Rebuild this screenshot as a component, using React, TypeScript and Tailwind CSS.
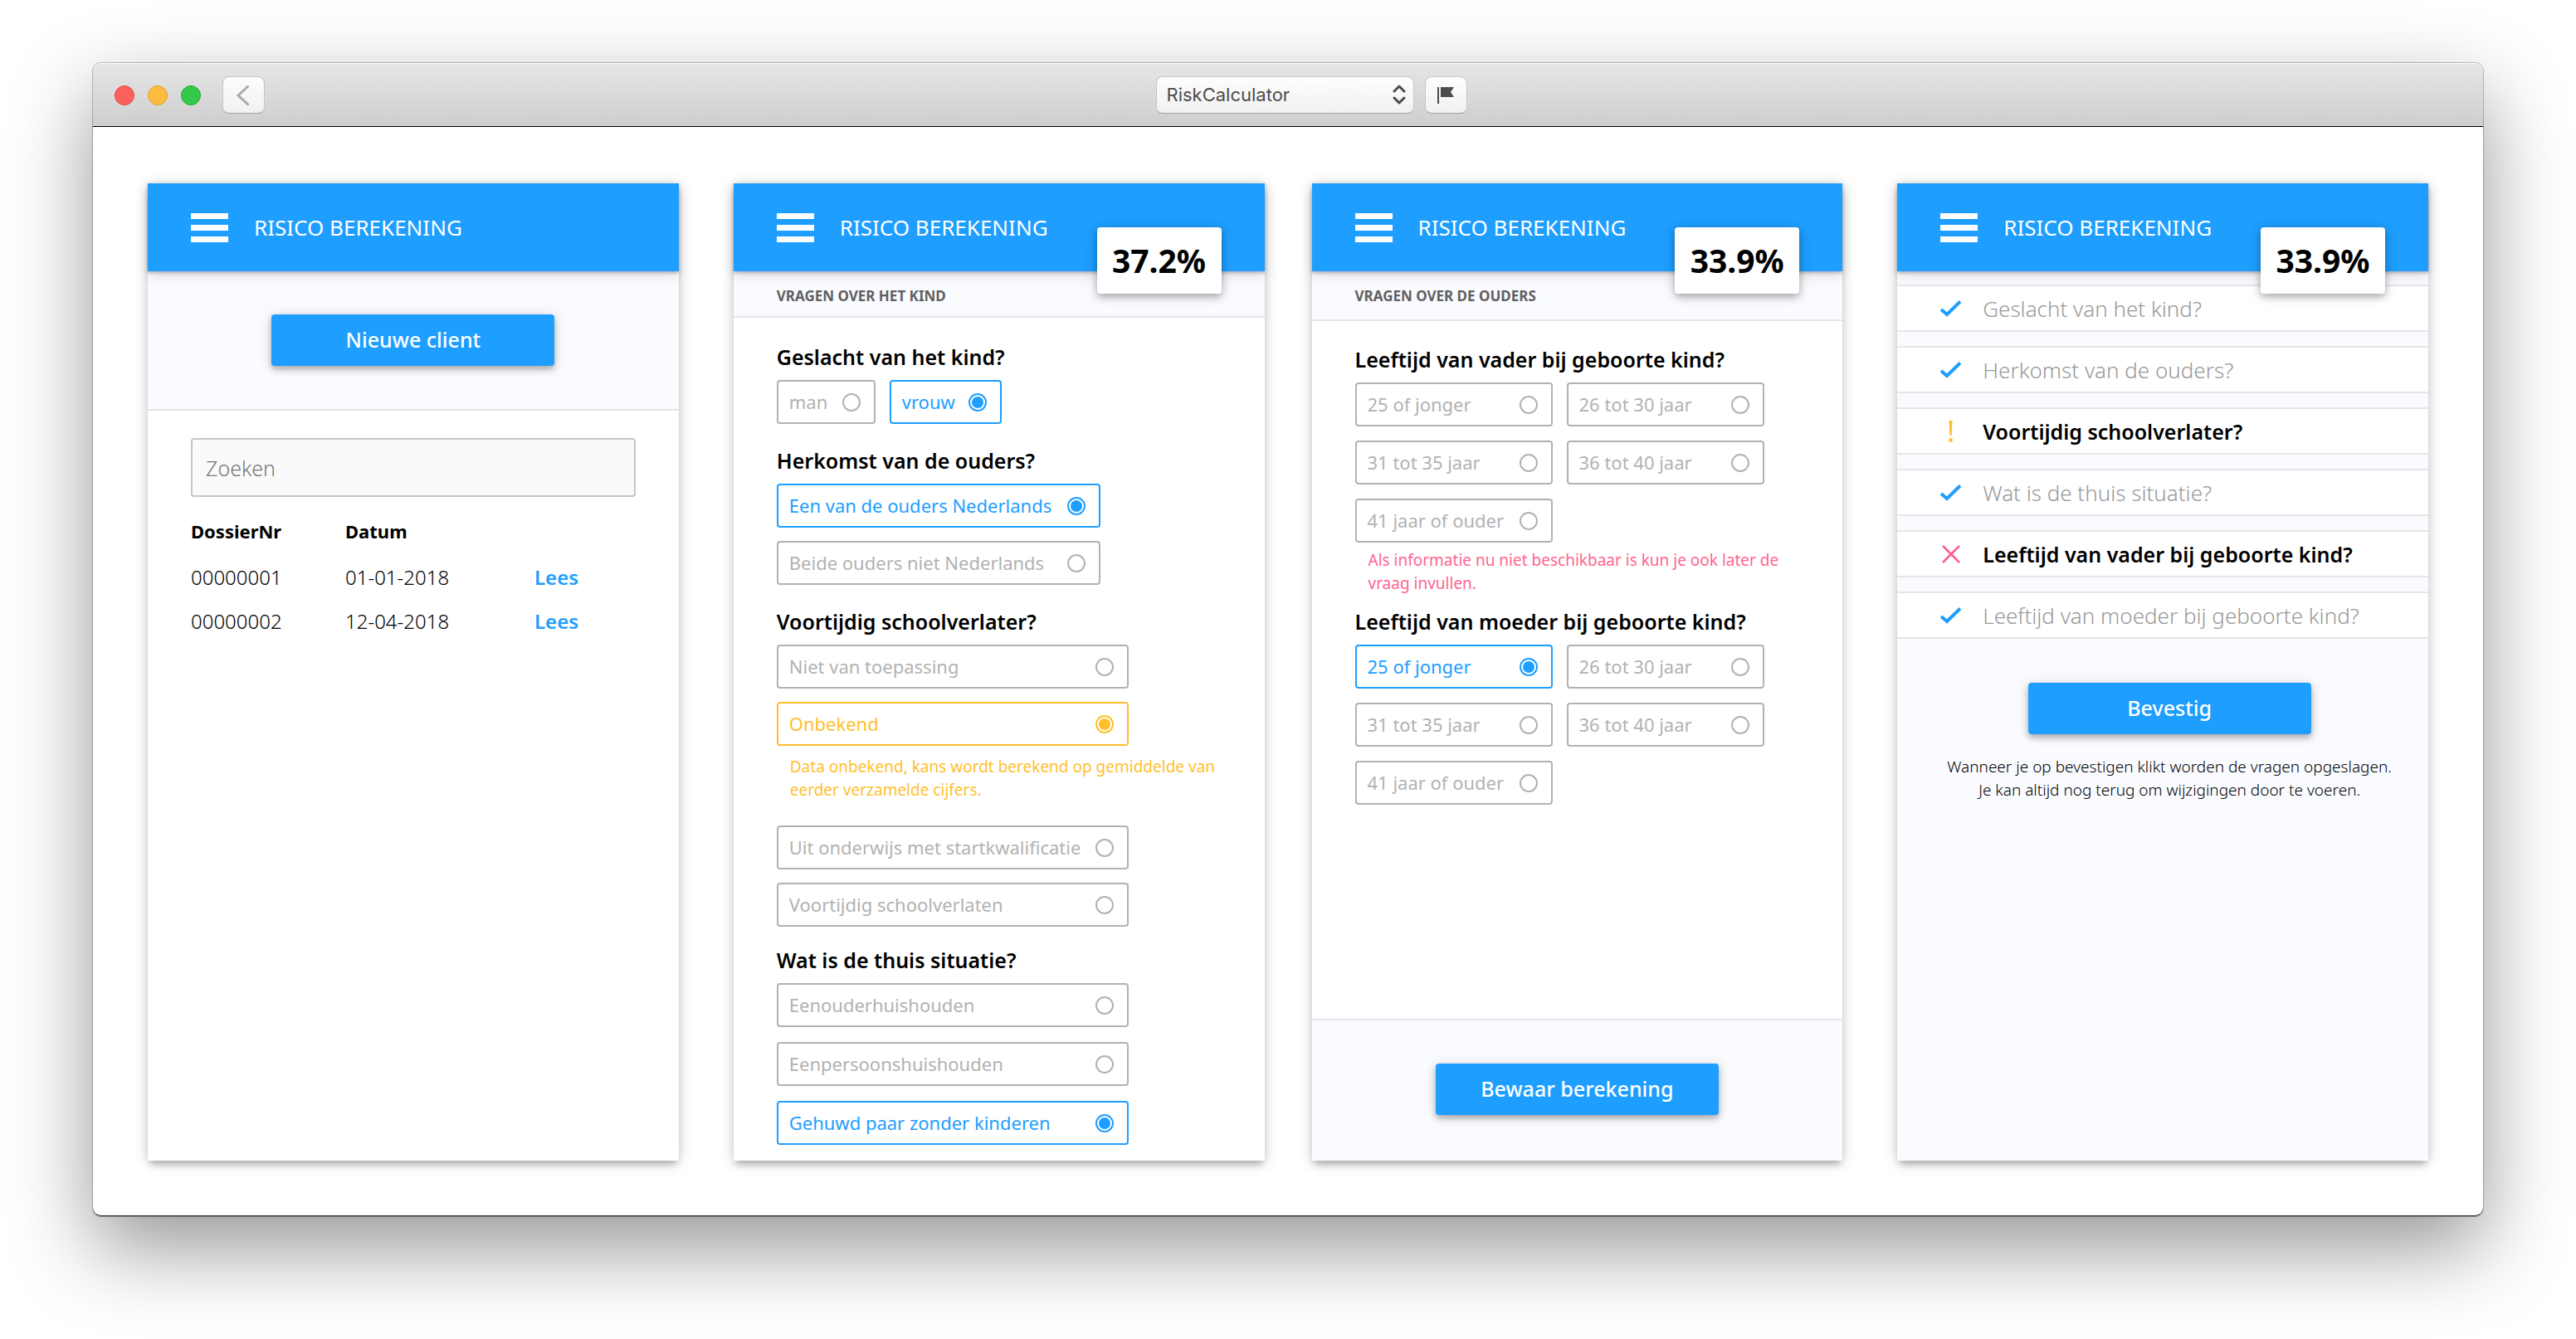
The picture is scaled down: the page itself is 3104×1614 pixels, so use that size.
import { useId, type ReactNode } from 'react';

type Option = { label: string; checked?: boolean; unknown?: boolean; width?: string; hint?: string };

const AGES = ['25 of jonger', '26 tot 30 jaar', '31 tot 35 jaar', '36 tot 40 jaar', '41 jaar of ouder'];

function TitleBar() {
  return (
    <header className="grid h-[77px] grid-cols-[1fr_311px_1fr] items-center rounded-t-[10px] border-t border-b border-t-white border-b-black bg-linear-to-b from-[#e6e6e6] to-[#cecece] pl-[26px] pr-[34px]">
      <div className="flex items-center gap-[26px]">
        <div className="flex gap-4">
          <span className="size-6 rounded-full border border-[#e2463f] bg-[#fc605c]" />
          <span className="size-6 rounded-full border border-[#dfa023] bg-[#fdbc40]" />
          <span className="size-6 rounded-full border border-[#1dad2b] bg-[#34c84a]" />
        </div>
        <button
          type="button"
          aria-label="Terug"
          className="flex h-[45px] w-[51px] items-center justify-center rounded-lg border border-[#c6c6c6] border-b-[#a3a3a3] bg-linear-to-b from-[#fdfdfd] to-[#f1f1f1]"
        >
          <svg className="mr-1 h-6 w-4" viewBox="0 0 16 24" fill="none" stroke="#a9a9a9" strokeWidth="3">
            <path d="M15 1 3 12l12 11" strokeLinecap="round" />
          </svg>
        </button>
      </div>
      <div className="relative">
        <select
          aria-label="Project"
          className="h-[45px] w-full appearance-none rounded-lg border border-[#c6c6c6] border-b-[#a3a3a3] bg-linear-to-b from-[#fdfdfd] to-[#f1f1f1] pl-3 font-[Inter,sans-serif] text-[22px] text-[#4c4c4c]"
        >
          <option>RiskCalculator</option>
        </select>
        <svg
          className="pointer-events-none absolute top-[10px] right-[10px] h-6 w-4"
          viewBox="0 0 16 24"
          fill="none"
          stroke="#4c4c4c"
          strokeWidth="3"
          strokeLinecap="round"
          strokeLinejoin="round"
        >
          <path d="m2 8 6-6 6 6M2 16l6 6 6-6" />
        </svg>
      </div>
      <button
        type="button"
        aria-label="Markeren"
        className="ml-[13px] flex h-[45px] w-[51px] items-center justify-center rounded-lg border border-[#c6c6c6] border-b-[#a3a3a3] bg-linear-to-b from-[#fdfdfd] to-[#f1f1f1]"
      >
        <svg className="h-5 w-5" viewBox="0 0 20 20" fill="#4c4c4c">
          <path d="M0 0h2v20H0zM4 0h16l-4 6 4 6H4z" />
        </svg>
      </button>
    </header>
  );
}

function Panel({ score, className, children }: { score?: string; className: string; children: ReactNode }) {
  return (
    <section
      className={`flex min-w-0 flex-1 flex-col shadow-[0_7px_8px_-3px_rgba(0,0,0,0.24),0_2px_16px_rgba(0,0,0,0.2)] ${className}`}
    >
      <header className="relative flex h-[106px] shrink-0 items-center gap-[31px] bg-[#1e9eff] px-[52px] shadow-[0_2px_4px_rgba(0,0,0,0.25),0_6px_14px_rgba(0,0,0,0.1)]">
        <button type="button" aria-label="Menu" className="flex flex-col gap-[7px]">
          <span className="h-[7px] w-[45px] bg-white" />
          <span className="h-[7px] w-[45px] bg-white" />
          <span className="h-[7px] w-[45px] bg-white" />
        </button>
        <h2 className="text-[26px] leading-8 whitespace-nowrap text-white">RISICO BEREKENING</h2>
        {score && (
          <output className="absolute top-1/2 right-[52px] flex h-20 w-[150px] items-center justify-center rounded-sm bg-white text-[39px] font-bold shadow-[0_4px_8px_rgba(0,0,0,0.24),0_2px_16px_rgba(0,0,0,0.16)]">
            {score}
          </output>
        )}
      </header>
      {children}
    </section>
  );
}

function PrimaryButton({ children }: { children: ReactNode }) {
  return (
    <button
      type="button"
      className="h-[62px] w-[341px] rounded-sm bg-[#1e9eff] text-[25px] font-medium text-white shadow-[0_4px_7px_rgba(0,0,0,0.26),0_2px_16px_rgba(0,0,0,0.14)]"
    >
      {children}
    </button>
  );
}

function SectionTitle({ className, children }: { className: string; children: ReactNode }) {
  return (
    <h3
      className={`border-b-2 border-[#e5e6ea] bg-[#fafbff] px-[52px] pt-[18px] text-[17px] leading-6 font-bold text-[#606060] ${className}`}
    >
      {children}
    </h3>
  );
}

function Question({
  title,
  options,
  layout,
  optionWidth,
  note,
}: {
  title: string;
  options: Option[];
  layout: string;
  optionWidth: string;
  note?: string;
}) {
  const id = useId();
  return (
    <div role="radiogroup" aria-labelledby={id}>
      <h4 id={id} className="mb-3 text-[25px] leading-8 font-semibold">
        {title}
      </h4>
      <div className={layout}>
        {options.map((o) => (
          <div key={o.label} className="contents">
            <label
              className={`flex h-[53px] items-center justify-between rounded-sm border-2 border-[#b2b2b2] pr-4 pl-[13px] text-[22px] whitespace-nowrap text-[#b2b2b2] ${
                o.unknown
                  ? 'has-checked:border-[#ffbf2d] has-checked:text-[#ffbf2d]'
                  : 'has-checked:border-[#1e9eff] has-checked:text-[#1e9eff]'
              } ${o.width ?? optionWidth}`}
            >
              {o.label}
              <input
                type="radio"
                name={id}
                defaultChecked={o.checked}
                className="size-[22px] shrink-0 appearance-none rounded-full border-2 border-current bg-clip-content p-[2px] checked:bg-current"
              />
            </label>
            {o.hint && (
              <p className="-mt-[5px] mb-[13px] pl-4 text-[19px] leading-7 text-[#ffbf2d]">{o.hint}</p>
            )}
          </div>
        ))}
      </div>
      {note && <p className="mt-[7px] pl-4 text-[19px] leading-7 text-[#ff6591]">{note}</p>}
    </div>
  );
}

function CheckIcon() {
  return (
    <svg className="h-5 w-[25px]" viewBox="0 0 25 20" fill="none" stroke="#1e9eff" strokeWidth="4">
      <path d="m1 11 7 6L24 1.500" />
    </svg>
  );
}

function WarnIcon() {
  return (
    <svg className="h-[26px] w-[25px]" viewBox="0 0 25 26" fill="#ffbf2d">
      <path d="M10.500 0h4l-.8 18h-2.400z" />
      <circle cx="12.500" cy="23.500" r="2.400" />
    </svg>
  );
}

function CrossIcon() {
  return (
    <svg className="h-[22px] w-[25px]" viewBox="0 0 25 22" fill="none" stroke="#ff5c8d" strokeWidth="2.500">
      <path d="m3 1 20 20M23 1 3 21" />
    </svg>
  );
}

const REVIEW: { label: string; state: 'ok' | 'warn' | 'missing' }[] = [
  { label: 'Geslacht van het kind?', state: 'ok' },
  { label: 'Herkomst van de ouders?', state: 'ok' },
  { label: 'Voortijdig schoolverlater?', state: 'warn' },
  { label: 'Wat is de thuis situatie?', state: 'ok' },
  { label: 'Leeftijd van vader bij geboorte kind?', state: 'missing' },
  { label: 'Leeftijd van moeder bij geboorte kind?', state: 'ok' },
];

const ICONS = { ok: <CheckIcon />, warn: <WarnIcon />, missing: <CrossIcon /> };

const FILES = [
  { nr: '00000001', date: '01-01-2018' },
  { nr: '00000002', date: '12-04-2018' },
];

function ClientsPanel() {
  return (
    <Panel className="bg-white">
      <div className="flex justify-center border-b-2 border-[#e5e6ea] bg-[#fafbff] py-[52px]">
        <PrimaryButton>Nieuwe client</PrimaryButton>
      </div>
      <div className="px-[52px] pt-[33px]">
        <input
          type="search"
          aria-label="Zoeken"
          placeholder="Zoeken"
          className="h-[71px] w-full rounded-sm border-2 border-[#c6c6c6] bg-[#fafafa] px-4 text-[25px] font-light placeholder:text-[#777]"
        />
        <table className="mt-3 w-full table-fixed text-left">
          <thead>
            <tr className="h-[58px] text-[22px] font-bold">
              <th className="w-[186px]">DossierNr</th>
              <th className="w-[228px]">Datum</th>
              <th aria-label="Openen" />
            </tr>
          </thead>
          <tbody>
            {FILES.map((f) => (
              <tr key={f.nr} className="h-[53px] text-[24px] font-light">
                <td>{f.nr}</td>
                <td>{f.date}</td>
                <td>
                  <a href="#" className="font-semibold text-[#1e9eff]">
                    Lees
                  </a>
                </td>
              </tr>
            ))}
          </tbody>
        </table>
      </div>
    </Panel>
  );
}

function ChildPanel() {
  return (
    <Panel score="37.2%" className="bg-white">
      <SectionTitle className="h-14">VRAGEN OVER HET KIND</SectionTitle>
      <div className="flex flex-col gap-7 px-[52px] pt-[31px] pb-[19px]">
        <Question
          title="Geslacht van het kind?"
          layout="flex gap-[17px]"
          optionWidth=""
          options={[
            { label: 'man', width: 'w-[119px]' },
            { label: 'vrouw', width: 'w-[135px]', checked: true },
          ]}
        />
        <Question
          title="Herkomst van de ouders?"
          layout="flex flex-col gap-4"
          optionWidth="w-[390px]"
          options={[
            { label: 'Een van de ouders Nederlands', checked: true },
            { label: 'Beide ouders niet Nederlands' },
          ]}
        />
        <div className="flex flex-col gap-6">
          <Question
            title="Voortijdig schoolverlater?"
            layout="flex flex-col gap-4"
            optionWidth="w-[424px]"
            options={[
              { label: 'Niet van toepassing' },
              {
                label: 'Onbekend',
                checked: true,
                unknown: true,
                hint: 'Data onbekend, kans wordt berekend op gemiddelde van eerder verzamelde cijfers.',
              },
              { label: 'Uit onderwijs met startkwalificatie' },
              { label: 'Voortijdig schoolverlaten' },
            ]}
          />
          <Question
            title="Wat is de thuis situatie?"
            layout="flex flex-col gap-[18px]"
            optionWidth="w-[424px]"
            options={[
              { label: 'Eenouderhuishouden' },
              { label: 'Eenpersoonshuishouden' },
              { label: 'Gehuwd paar zonder kinderen', checked: true },
            ]}
          />
        </div>
      </div>
    </Panel>
  );
}

function ParentsPanel() {
  return (
    <Panel score="33.9%" className="bg-white">
      <SectionTitle className="h-[60px]">VRAGEN OVER DE OUDERS</SectionTitle>
      <div className="flex grow flex-col gap-4 px-[52px] pt-[30px]">
        <Question
          title="Leeftijd van vader bij geboorte kind?"
          layout="grid grid-cols-[238px_238px] gap-[17px]"
          optionWidth=""
          options={AGES.map((label) => ({ label }))}
          note="Als informatie nu niet beschikbaar is kun je ook later de vraag invullen."
        />
        <Question
          title="Leeftijd van moeder bij geboorte kind?"
          layout="grid grid-cols-[238px_238px] gap-[17px]"
          optionWidth=""
          options={AGES.map((label, i) => ({ label, checked: i === 0 }))}
        />
      </div>
      <div className="flex justify-center border-t-2 border-[#e5e6ea] bg-[#fafbff] pt-[52px] pb-[55px]">
        <PrimaryButton>Bewaar berekening</PrimaryButton>
      </div>
    </Panel>
  );
}

function ReviewPanel() {
  return (
    <Panel score="33.9%" className="bg-[#fafbff]">
      <ul className="flex flex-col gap-[17px] pt-4">
        {REVIEW.map((r) => (
          <li
            key={r.label}
            className="flex h-[57px] items-center gap-[26px] border-y-2 border-[#e5e6ea] bg-white px-[52px]"
          >
            {ICONS[r.state]}
            <span
              className={
                r.state === 'ok' ? 'text-[26px] leading-8 font-light text-[#999]' : 'text-[25px] leading-8 font-semibold'
              }
            >
              {r.label}
            </span>
          </li>
        ))}
      </ul>
      <div className="flex flex-col items-center gap-[25px] pt-[53px] pl-4 text-center">
        <PrimaryButton>Bevestig</PrimaryButton>
        <p className="text-[19px] leading-7 font-light">
          Wanneer je op bevestigen klikt worden de vragen opgeslagen.
          <br />
          Je kan altijd nog terug om wijzigingen door te voeren.
        </p>
      </div>
    </Panel>
  );
}

export default function App() {
  return (
    <div className="min-h-screen bg-white px-[112px] pt-[76px] pb-[148px] font-['Noto_Sans','Open_Sans',sans-serif] text-black">
      <div className="rounded-[10px] border-b border-[#222] bg-white shadow-[0_0_0_1px_rgba(0,0,0,0.25),0_38px_100px_rgba(0,0,0,0.42)]">
        <TitleBar />
        <main className="flex gap-[66px] px-[66px] pt-[68px] pb-[66px]">
          <ClientsPanel />
          <div className="flex min-w-0 flex-[2_1_57px] gap-[57px]">
            <ChildPanel />
            <ParentsPanel />
          </div>
          <ReviewPanel />
        </main>
      </div>
    </div>
  );
}
